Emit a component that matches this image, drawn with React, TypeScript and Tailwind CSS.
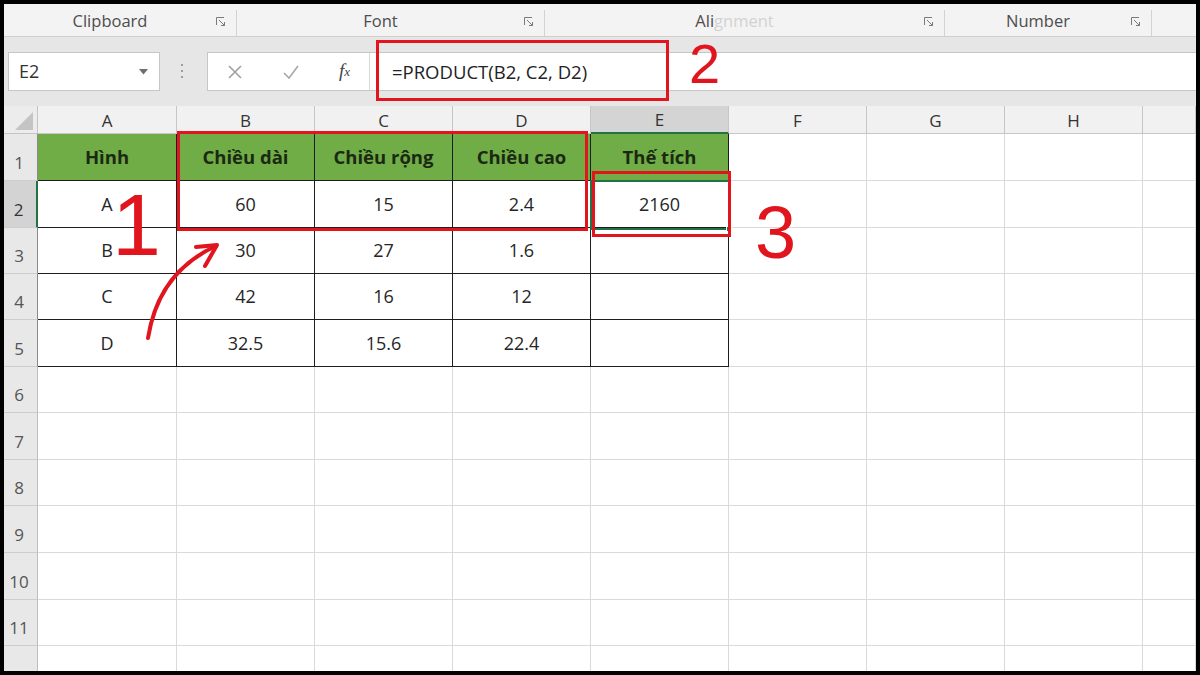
import clsx from "clsx";

const columns = ["A", "B", "C", "D", "E", "F", "G", "H", ""];
const colWidths = [
  "w-[139px]",
  "w-[138px]",
  "w-[138px]",
  "w-[138px]",
  "w-[138px]",
  "w-[138px]",
  "w-[138px]",
  "w-[138px]",
  "w-[53px]",
];
const rowHeights = [
  "h-[47px]",
  "h-[47px]",
  "h-[46px]",
  "h-[46px]",
  "h-[47px]",
  "h-[46px]",
  "h-[47px]",
  "h-[46px]",
  "h-[47px]",
  "h-[47px]",
  "h-[46px]",
  "h-[46px]",
];

const table = [
  ["Hình", "Chiều dài", "Chiều rộng", "Chiều cao", "Thế tích"],
  ["A", "60", "15", "2.4", "2160"],
  ["B", "30", "27", "1.6", ""],
  ["C", "42", "16", "12", ""],
  ["D", "32.5", "15.6", "22.4", ""],
];

function Launcher() {
  return (
    <svg width="10" height="10" viewBox="0 0 10 10" className="shrink-0">
      <path d="M0.5 8V0.5H8" stroke="#7a7a7a" fill="none" />
      <path d="M3 3L8.5 8.5M5 8.5H8.5V5" stroke="#7a7a7a" fill="none" />
    </svg>
  );
}

function RibbonGroup({ label, width, faded }: { label: string; width: string; faded?: boolean }) {
  return (
    <div className={clsx("flex h-full items-center", width)}>
      <span className="flex-1 pt-[2px] text-center text-[16.5px] text-[#4d4d4d]">
        {faded ? (
          <>
            Ali<span className="text-[#d2d2d2]">gnment</span>
          </>
        ) : (
          label
        )}
      </span>
      <div className="mr-[10px] mt-[4px]">
        <Launcher />
      </div>
      <div className="h-[26px] w-px self-end bg-[#d3d3d3]" />
    </div>
  );
}

function Ribbon() {
  return (
    <div className="flex h-[33px] shrink-0 border-b border-[#d0d0d0] bg-[#f3f3f3]">
      <RibbonGroup label="Clipboard" width="w-[233px]" />
      <RibbonGroup label="Font" width="w-[308px]" />
      <RibbonGroup label="Alignment" width="w-[400px]" faded />
      <RibbonGroup label="Number" width="w-[207px]" />
      <div className="flex-1" />
    </div>
  );
}

function FormulaBar() {
  return (
    <div className="flex h-[69px] shrink-0 items-start bg-[#e6e6e6] pt-[15px]">
      <div className="ml-[4px] flex h-[39px] w-[152px] items-center justify-between border border-[#c6c6c6] bg-white pl-[10px] pr-[11px] text-[18px] text-[#333]">
        <span>E2</span>
        <svg width="9" height="6" viewBox="0 0 9 6">
          <path d="M0 0H9L4.5 5.5Z" fill="#6e6e6e" />
        </svg>
      </div>
      <div className="ml-[20px] mt-[12px] flex w-[4px] flex-col items-center gap-[4px]">
        <div className="h-[2px] w-[2px] bg-[#9c9c9c]" />
        <div className="h-[2px] w-[2px] bg-[#9c9c9c]" />
        <div className="h-[2px] w-[2px] bg-[#9c9c9c]" />
      </div>
      <div className="ml-[23px] flex h-[39px] flex-1 items-center border border-r-0 border-[#c6c6c6] bg-white">
        <div className="flex w-[54px] justify-center">
          <svg width="16" height="16" viewBox="0 0 16 16">
            <path d="M2 2L14 14M14 2L2 14" stroke="#a0a0a0" strokeWidth="1.6" />
          </svg>
        </div>
        <div className="flex w-[58px] justify-center">
          <svg width="18" height="16" viewBox="0 0 18 16">
            <path d="M2 9L7 14L16 2" stroke="#a8a8a8" strokeWidth="1.6" fill="none" />
          </svg>
        </div>
        <div className="flex h-full w-[50px] items-center justify-center border-r border-[#dadada] font-['Liberation_Serif',serif] text-[19px] italic text-[#444]">
          f<span className="text-[13px]">x</span>
        </div>
        <span className="pl-[22px] text-[18.5px] text-[#222]">=PRODUCT(B2, C2, D2)</span>
      </div>
    </div>
  );
}

function ColumnHeaders() {
  return (
    <div className="flex h-[28px] shrink-0">
      <div className="w-[34px] shrink-0 border-r border-b border-[#c4c4c4] bg-[#ececec]">
        <svg width="34" height="28" viewBox="0 0 34 28" className="block">
          <path d="M29 6V24H11Z" fill="#c4c4c4" />
        </svg>
      </div>
      {columns.map((c, i) => (
        <div
          key={i}
          className={clsx(
            "flex shrink-0 items-center justify-center border-r border-[#c6c6c6] pt-[2px] text-[17px] text-[#333]",
            colWidths[i],
            c === "E" ? "border-b-2 border-b-[#217346] bg-[#d4d4d4]" : "border-b bg-[#f1f1f1]"
          )}
        >
          {c}
        </div>
      ))}
    </div>
  );
}

function Cell({ row, col }: { row: number; col: number }) {
  const inTable = row < 5 && col < 5;
  const value = inTable ? table[row][col] : "";
  const header = inTable && row === 0;
  return (
    <div
      className={clsx(
        "flex shrink-0 items-center justify-center border-r border-b",
        colWidths[col],
        inTable ? "border-[#1e1e1e]" : "border-[#dadada]",
        header ? "bg-[#70ad47] text-[18.5px] font-bold text-[#1b2912]" : "bg-white text-[18px] text-[#262626]"
      )}
    >
      {value}
    </div>
  );
}

function Sheet() {
  return (
    <div className="flex flex-col">
      {rowHeights.map((h, r) => (
        <div key={r} className={clsx("flex shrink-0", h)}>
          <div
            className={clsx(
              "flex w-[34px] shrink-0 items-end justify-center border-b border-[#cdcdcd] pb-[5px] pr-[3px] text-[17px]",
              r === 1
                ? "border-r-2 border-r-[#217346] bg-[#d3d3d3] text-[#333]"
                : r < 5
                  ? "border-r border-r-[#8a8a8a] bg-[#e8e8e8] text-[#555]"
                  : "border-r border-r-[#bdbdbd] bg-[#e8e8e8] text-[#555]"
            )}
          >
            {r < 11 ? r + 1 : ""}
          </div>
          {columns.map((_, c) => (
            <Cell key={c} row={r} col={c} />
          ))}
        </div>
      ))}
    </div>
  );
}

export default function App() {
  return (
    <div className="relative h-[675px] w-[1200px] overflow-hidden bg-black p-[4px] font-['Open_Sans','Noto_Sans',sans-serif]">
      <div className="flex h-full flex-col overflow-hidden bg-white">
        <Ribbon />
        <FormulaBar />
        <ColumnHeaders />
        <Sheet />
      </div>

      {/* selected cell E2 */}
      <div className="absolute left-[590px] top-[180px] h-[50px] w-[140px] border-2 border-[#217346]" />
      <div className="absolute left-[726px] top-[226px] h-[6px] w-[6px] border border-white bg-[#217346]" />

      {/* annotation boxes */}
      <div className="absolute left-[177px] top-[131px] h-[100px] w-[411px] border-[3px] border-[#e0151d]" />
      <div className="absolute left-[376px] top-[40px] h-[61px] w-[293px] border-[3px] border-[#e0151d]" />
      <div className="absolute left-[592px] top-[171px] h-[66px] w-[139px] border-[3px] border-[#e0151d]" />

      {/* handwritten labels */}
      <span className="absolute left-[112px] top-[192px] font-['Liberation_Sans',Arial,sans-serif] text-[88px] leading-[0.75] text-[#e0151d]">
        1
      </span>
      <span className="absolute left-[689px] top-[43px] font-['Liberation_Sans',Arial,sans-serif] text-[56px] leading-[0.75] text-[#e0151d]">
        2
      </span>
      <span className="absolute left-[755px] top-[205px] font-['Liberation_Sans',Arial,sans-serif] text-[74px] leading-[0.75] text-[#e0151d]">
        3
      </span>

      <svg className="absolute left-0 top-0" width="1200" height="675" viewBox="0 0 1200 675" pointerEvents="none">
        <path d="M148 338C154 300 172 266 216 246" stroke="#e0151d" strokeWidth="4" fill="none" strokeLinecap="round" />
        <path d="M196 247L217 245L205 266" stroke="#e0151d" strokeWidth="4" fill="none" strokeLinecap="round" strokeLinejoin="round" />
      </svg>
    </div>
  );
}
